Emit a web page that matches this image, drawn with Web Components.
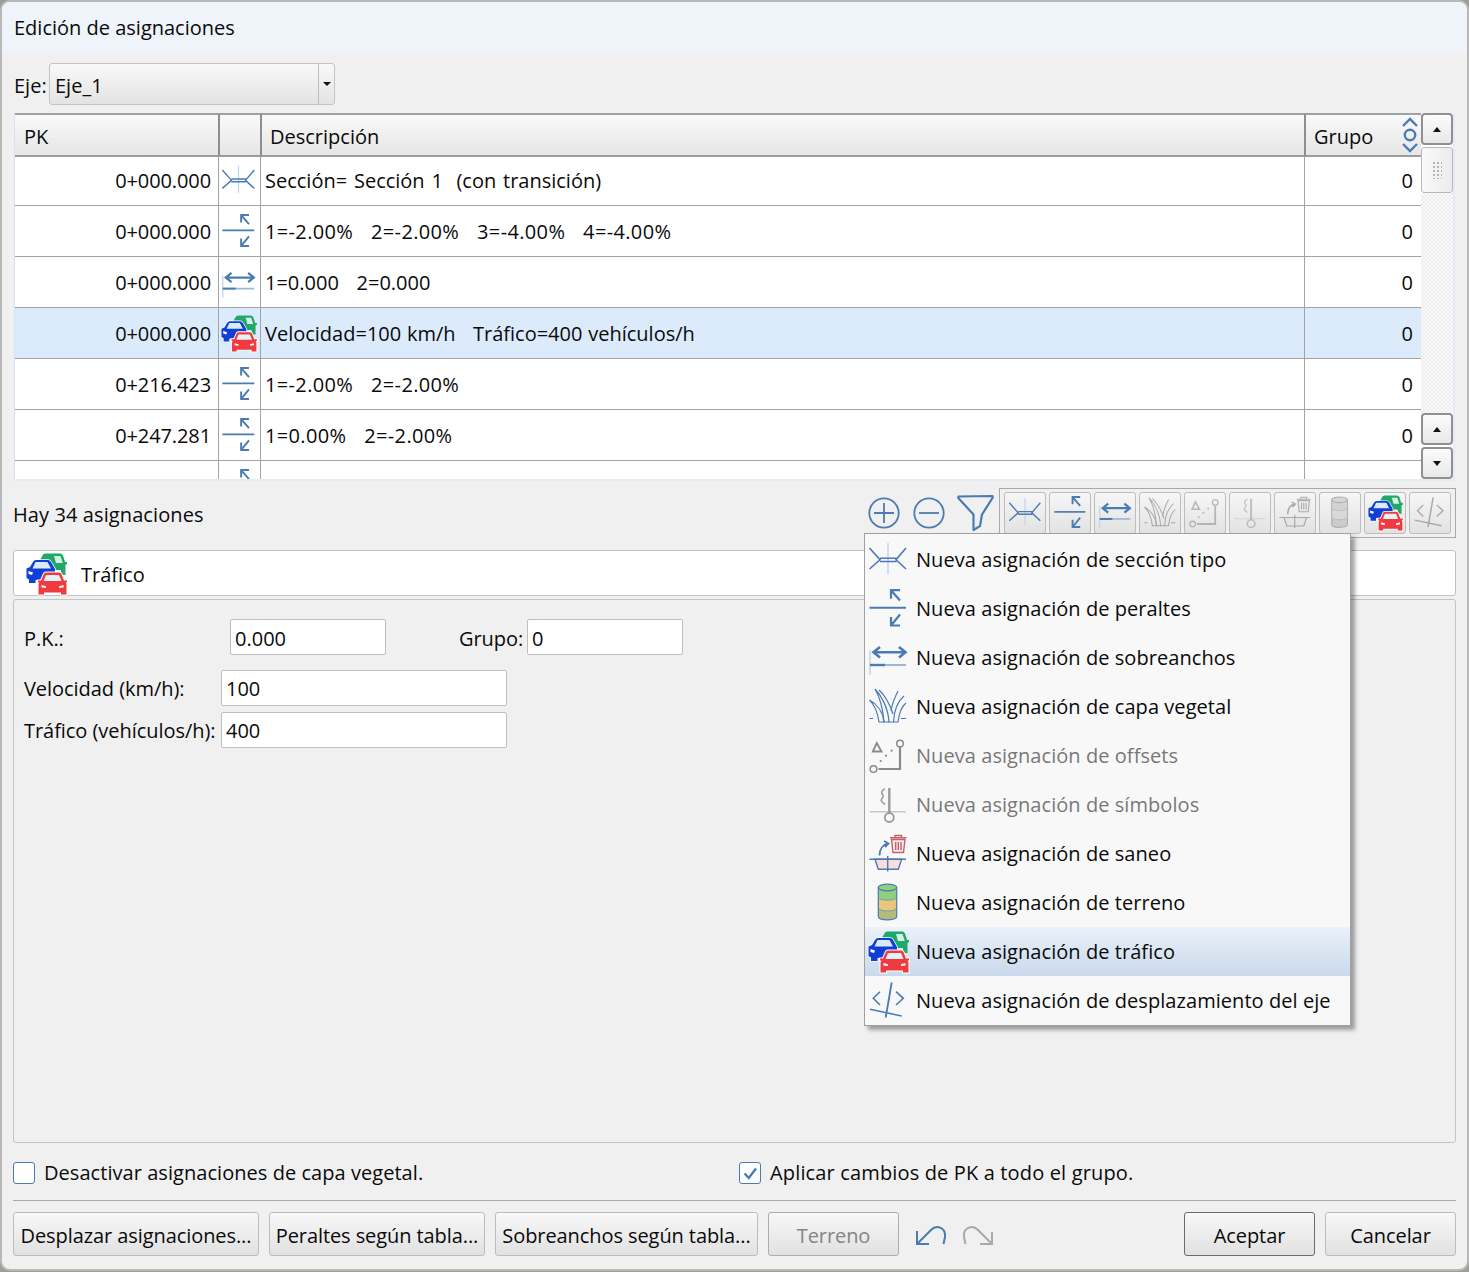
<!DOCTYPE html>
<html lang="es">
<head>
<meta charset="utf-8">
<title>Edición de asignaciones</title>
<style>
  html, body { margin: 0; padding: 0; background: #9c9e98; }
  body { width: 1469px; height: 1272px; overflow: hidden; font-family: "Open Sans", "Noto Sans", sans-serif; font-size: 20px; color: #0a0a0a; }
</style>
</head>
<body>
<edit-dialog heading="Edición de asignaciones">
  <axis-combo label="Eje:" value="Eje_1"></axis-combo>

  <assign-table>
    <assign-row first pk="0+000.000" icon="seccion" grupo="0"><span style="word-spacing:1.6px">Sección= Sección 1  (con transición)</span></assign-row>
    <assign-row pk="0+000.000" icon="peraltes" grupo="0"><span style="letter-spacing:.35px;word-spacing:.4px">1=-2.00%   2=-2.00%   3=-4.00%   4=-4.00%</span></assign-row>
    <assign-row pk="0+000.000" icon="sobreanchos" grupo="0"><span style="word-spacing:.7px">1=0.000   2=0.000</span></assign-row>
    <assign-row selected pk="0+000.000" icon="trafico" grupo="0"><span style="word-spacing:.6px">Velocidad=100 km/h   Tráfico=400 vehículos/h</span></assign-row>
    <assign-row pk="0+216.423" icon="peraltes" grupo="0"><span style="letter-spacing:.35px;word-spacing:.4px">1=-2.00%   2=-2.00%</span></assign-row>
    <assign-row pk="0+247.281" icon="peraltes" grupo="0"><span style="letter-spacing:.35px;word-spacing:.4px">1=0.00%   2=-2.00%</span></assign-row>
    <assign-row pk="" icon="peraltes" grupo=""></assign-row>
  </assign-table>

  <status-row text="Hay 34 asignaciones">
    <line-icon name="plus" size="36"></line-icon>
    <line-icon name="minus" size="36"></line-icon>
    <line-icon name="funnel" size="40"></line-icon>
    <tool-strip>
      <tool-btn icon="seccion"></tool-btn>
      <tool-btn icon="peraltes"></tool-btn>
      <tool-btn icon="sobreanchos"></tool-btn>
      <tool-btn icon="vegetal" muted></tool-btn>
      <tool-btn icon="offsets" muted></tool-btn>
      <tool-btn icon="simbolos" muted></tool-btn>
      <tool-btn icon="saneo" muted></tool-btn>
      <tool-btn icon="terreno" muted></tool-btn>
      <tool-btn icon="trafico"></tool-btn>
      <tool-btn icon="despl" muted></tool-btn>
    </tool-strip>
  </status-row>

  <type-strip icon="trafico">Tráfico</type-strip>

  <form-panel>
    <div slot="row1">
      <field-box low label="P.K.:" value="0.000" label-width="206" width="156"></field-box>
      <field-box low label="Grupo:" value="0" label-width="68" width="156" style="margin-left:73px"></field-box>
    </div>
    <field-box slot="row2" label="Velocidad (km/h):" value="100" label-width="197" width="286"></field-box>
    <field-box slot="row3" label="Tráfico (vehículos/h):" value="400" label-width="197" width="286"></field-box>
  </form-panel>

  <footer-checks>
    <check-box slot="left" style="letter-spacing:.05px">Desactivar asignaciones de capa vegetal.</check-box>
    <check-box slot="right" checked style="letter-spacing:.15px">Aplicar cambios de PK a todo el grupo.</check-box>
  </footer-checks>

  <footer-bar>
    <push-btn width="246">Desplazar asignaciones...</push-btn>
    <push-btn width="216">Peraltes según tabla...</push-btn>
    <push-btn width="263">Sobreanchos según tabla...</push-btn>
    <push-btn width="131" disabled>Terreno</push-btn>
    <line-icon name="undo" size="32" style="margin:8px 0 0 5px"></line-icon>
    <line-icon name="redo" size="32" style="margin:8px 0 0 7px"></line-icon>
    <push-btn slot="end" width="131" primary>Aceptar</push-btn>
    <push-btn slot="end" width="131">Cancelar</push-btn>
  </footer-bar>

  <popup-menu slot="overlay">
    <menu-item icon="seccion">Nueva asignación de sección tipo</menu-item>
    <menu-item icon="peraltes">Nueva asignación de peraltes</menu-item>
    <menu-item icon="sobreanchos">Nueva asignación de sobreanchos</menu-item>
    <menu-item icon="vegetal">Nueva asignación de capa vegetal</menu-item>
    <menu-item icon="offsets" disabled>Nueva asignación de offsets</menu-item>
    <menu-item icon="simbolos" disabled>Nueva asignación de símbolos</menu-item>
    <menu-item icon="saneo">Nueva asignación de saneo</menu-item>
    <menu-item icon="terreno">Nueva asignación de terreno</menu-item>
    <menu-item icon="trafico" active>Nueva asignación de tráfico</menu-item>
    <menu-item icon="despl">Nueva asignación de desplazamiento del eje</menu-item>
  </popup-menu>
</edit-dialog>

<script>
const BLUE = '#4a7bb3';
const PALE = '#c3d5ea';

const RED_CAR = 'M18 19.500Q18.700 18.500 20 18.500H33Q34.500 18.500 35.200 19.500L38 26.500H41V28.500H39.500Q40.500 29.500 40.500 31.500V40.500H35V38.500H18V40.500H12.500V31.500Q12.500 29.500 13.500 28.500H12V26.500H15Z';
const BLUE_CAR = 'M10 6H22Q24 6 25 8L29 15V22L14 26H9.500V29H3V25.500L.5 24V14.500L4 13 7 8Q8 6 10 6Z';
const GREEN_CAR = 'M19.500 -.5H34Q36 -.5 37 1.500L39 8H41V10.500H39.500V21H35V16H28L22 9H12L16 2.500Q17 -.5 19.500 -.5Z';

const ICONS = {
  seccion: `<path stroke="${PALE}" stroke-width="1.500" d="M20 3v31"/>
    <path fill="none" stroke="${BLUE}" stroke-width="1.600" d="M1.500 8 12 19.800 1.500 29M38 8 28 19.800 38 29M12 18.300h16.500M12 21.500h16.500"/>`,
  peraltes: `<path fill="none" stroke="${BLUE}" stroke-width="2" d="M1.500 18.700H38"/>
    <path fill="none" stroke="${BLUE}" stroke-width="2.200" d="M32 1.200H23V9.800M23 1.200 32 11.500M32 36.500H23V28M23 36.500 32 25.500"/>`,
  sobreanchos: `<path fill="none" stroke="${BLUE}" stroke-width="2.600" d="M6 14.300H37M12 9 5.500 14.300 12 19.600M31 9 37.500 14.300 31 19.600"/>
    <path stroke="${PALE}" stroke-width="1.500" d="M2 12V37"/>
    <path stroke="#9db8d6" stroke-width="2" d="M17 27H38"/><path stroke="${BLUE}" stroke-width="2.400" d="M2 27H17"/>`,
  vegetal: `<g fill="none" stroke="${BLUE}" stroke-width="1.200">
    <path d="M7 2C13 8 20 20 21 35h-5C15 23 13 12 7 2Z"/>
    <path d="M11 3C17 8 23 20 25 27"/>
    <path d="M1.500 13C6 17 10 26 11 35h5C15 25 9 17 1.500 13Z"/>
    <path d="M36 9C30 14 26 24 25.500 35h-5"/>
    <path d="M30 4C27 10 24 17 23 24"/>
    <path d="M38 16C33 20 31 27 30 35h-4.500"/>
    <path d="M1.500 31.500H5M33 31.500H38"/></g>`,
  offsets: `<g fill="none" stroke="#8a8a8a" stroke-width="1.500">
    <path stroke-width="1.800" d="M8.800 7 4.800 15.500H13.500Z"/><circle cx="32" cy="7.500" r="3.300"/><circle cx="5.500" cy="33" r="3.300"/>
    <path stroke-width="2.200" d="M32 11V33H10.500"/></g>
    <g fill="#8a8a8a"><circle cx="23.700" cy="14.700" r="1.100"/><circle cx="18" cy="19.700" r="1.100"/><circle cx="12.700" cy="25" r="1.100"/></g>`,
  simbolos: `<g fill="none" stroke="#9a9a9a"><path stroke="#c8c8c8" stroke-width="1.500" d="M1.500 26.700H38"/>
    <path stroke-width="2.400" d="M21.300 3V28"/><circle cx="21.300" cy="32.500" r="4.500" stroke-width="1.800"/>
    <path stroke-width="1.500" d="M17 4C13 5 13 8 15 10.500 16.800 12.500 12 13.500 13.500 16 14.500 18 16 18.500 17 19.500"/></g>`,
  saneo: `<path fill="#fbdcdc" stroke="${BLUE}" stroke-width="1.400" d="M7 25.300 10.300 35.300H30.300L33.700 25.300Z"/>
    <path fill="none" stroke="${BLUE}" stroke-width="1.400" d="M1.500 25.300H38M19.700 22V37.500"/>
    <path fill="none" stroke="${BLUE}" stroke-width="1.800" d="M11.500 21.500C11.500 15 15 10.500 20 9.500M16 7 20.500 9.500 17 13"/>
    <path fill="#fbe9e9" stroke="#c4616c" stroke-width="1.400" d="M23.500 5.500 25 18.500H35.500L37 5.500Z"/>
    <path fill="none" stroke="#c4616c" stroke-width="1.400" d="M22 3.800H38.500M27 3.500V1.500H33.500V3.500M27.700 8V16M30.300 8V16M33 8V16"/>`,
  terreno: `<path fill="#b5bb7a" stroke="${BLUE}" stroke-width="1.200" d="M10.300 4.500V33.500C10.300 38 28.700 38 28.700 33.500V4.500Z"/>
    <path fill="#e6c878" d="M11 15H28V25C28 29 11 29 11 25Z"/>
    <path fill="#8fcf80" d="M11 5H28V14C28 18 11 18 11 14Z"/>
    <ellipse cx="19.500" cy="4.500" rx="9.200" ry="3.300" fill="#8fcf80" stroke="${BLUE}" stroke-width="1.200"/>
    <path fill="none" stroke="#6f9bb8" stroke-width="1" d="M10.500 14.500C11 18 28 18 28.500 14.500M10.500 25C11 29 28 29 28.500 25"/>`,
  trafico: `<path fill="#1fa86a" d="${GREEN_CAR}"/><path fill="#d5f0e2" d="M28 2H34.500L36.800 9H30Z"/>
    <path fill="#0f3fd6" stroke="#fff" stroke-width="1.500" paint-order="stroke" d="${BLUE_CAR}"/>
    <path fill="#dcebfb" d="M9.500 8H21.500L25 14.500H6.500Z"/><path fill="#fff" d="M2.500 17 7 18.500 6 21 2.500 20Z"/>
    <path fill="#f03a3f" stroke="#fff" stroke-width="2" paint-order="stroke" d="${RED_CAR}"/>
    <path fill="#e4f2f6" d="M17.500 27 20 21H33L35.500 27Z"/>
    <path fill="#fff" d="M15.500 31 20 32.300V34L15.500 33.500ZM37.500 31 33 32.300V34L37.500 33.500Z"/>`,
  despl: `<g fill="none" stroke="${BLUE}"><path stroke-width="1.800" d="M23.700 1.500 17.700 36.500"/>
    <path stroke-width="1.600" d="M12 10.700 5.300 17.300 12 24M28 10.700 35.300 17.300 28 24M2 28.300 33.700 35"/></g>`
};

const LINES = {
  plus: [36, `<circle cx="18" cy="18" r="14.700" fill="none" stroke="${BLUE}" stroke-width="1.800"/><path stroke="${BLUE}" stroke-width="1.800" d="M18 8V28M8 18H28"/>`],
  minus: [36, `<circle cx="18" cy="18" r="14.700" fill="none" stroke="${BLUE}" stroke-width="1.800"/><path stroke="${BLUE}" stroke-width="1.800" d="M8 18H28"/>`],
  funnel: [40, `<path fill="none" stroke="${BLUE}" stroke-width="2.200" stroke-linejoin="round" d="M2.500 3.500 36.500 3 36.800 4.500 26 21.500 24 33 17.500 37V21.500L2.300 5Z"/>`],
  undo: [32, `<path fill="none" stroke="${BLUE}" stroke-width="2" d="M3 9V22H15M3 22 17 8C23 2 32 6 31 15L29.500 22"/>`],
  redo: [32, `<path fill="none" stroke="#a9a9a9" stroke-width="2" d="M29 10V22H17M29 22 15 8C9 2 0 6 1 15L2.500 22"/>`]
};

class EditDialog extends HTMLElement {
  constructor() {
    super();
    this.attachShadow({ mode: 'open' });
  }

  getTemplate() {
    const templates = document.createElement('template');
    templates.innerHTML = `
      <header>${this.getAttribute('heading')}</header>
      <main><slot></slot></main>
      <slot name="overlay"></slot>
      ${this.getStyles()}
    `;
    return templates;
  }

  getStyles() {
    return `
      <style>
        :host {
          display: block;
          position: relative;
          box-sizing: border-box;
          width: 1469px;
          height: 1271px;
          background: #f0f0f0;
          border: 2px solid #b9b9b9;
          border-radius: 10px;
          overflow: hidden;
        }
        header {
          height: 50px;
          line-height: 52px;
          padding-left: 12px;
          background: #eef4fa;
        }
        main {
          display: flex;
          flex-direction: column;
          padding: 11px 11px 0;
        }
      </style>
    `;
  }

  connectedCallback() {
    this.shadowRoot.appendChild(this.getTemplate().content.cloneNode(true));
  }
}

class AxisCombo extends HTMLElement {
  constructor() {
    super();
    this.attachShadow({ mode: 'open' });
  }

  connectedCallback() {
    this.shadowRoot.innerHTML = `
      <style>
        :host { display: flex; align-items: center; height: 42px; }
        .lab { width: 36px; padding: 3px 0 0 1px; box-sizing: border-box; }
        .box {
          display: flex;
          align-items: center;
          width: 286px;
          height: 42px;
          box-sizing: border-box;
          border: 1px solid #c4c4c4;
          border-radius: 3px;
          background: linear-gradient(#f9f9f9, #e3e3e3);
        }
        .val { flex: 1; padding: 3px 0 0 5px; }
        .drop { width: 15px; height: 40px; border-left: 1px solid #bdbdbd; display: flex; align-items: center; justify-content: center; }
        .drop i { border: 4px solid transparent; border-top: 4px solid #111; border-bottom: 0; }
      </style>
      <span class="lab">${this.getAttribute('label')}</span>
      <div class="box"><span class="val">${this.getAttribute('value')}</span><span class="drop"><i></i></span></div>
    `;
  }
}

class AssignTable extends HTMLElement {
  constructor() {
    super();
    this.attachShadow({ mode: 'open' });
  }

  connectedCallback() {
    this.shadowRoot.innerHTML = `
      <style>
        :host {
          display: flex;
          box-sizing: border-box;
          width: 1441px;
          height: 368px;
          margin: 8px 0 0 1px;
          border-left: 1px solid #d5e4f4;
          border-right: 2px solid #e4edf7;
          border-bottom: 2px solid #e4edf7;
          background: #fff;
        }
        .grid { width: 1406px; height: 100%; overflow: hidden; }
        .head { display: grid; grid-template-columns: 205px 42px 1044px 115px; height: 44px; box-sizing: border-box; }
        .head div {
          box-sizing: border-box;
          display: flex;
          align-items: center;
          padding: 3px 0 0 8px;
          border-top: 2px solid #9aa3a8;
          border-bottom: 2px solid #9c9c9c;
          border-right: 2px solid #8e8e8e;
          background: linear-gradient(#f9f9f9, #e6e6e6);
          position: relative;
        }
        .head div:first-child { padding-left: 9px; }
        .head div:last-child { border-right: 0; }
        .sort { position: absolute; right: 1px; top: 1px; }
        .bar { width: 32px; display: flex; flex-direction: column; }
        .btn {
          box-sizing: border-box;
          height: 32px;
          border: 2px solid #909090;
          border-radius: 4px;
          background: linear-gradient(#fcfcfc, #e8e8e8);
          display: flex;
          align-items: center;
          justify-content: center;
        }
        .btn + .btn { margin-top: 2px; }
        .up { border: 4px solid transparent; border-bottom: 5px solid #111; border-top: 0; }
        .dn { border: 4px solid transparent; border-top: 5px solid #111; border-bottom: 0; }
        .thumb {
          box-sizing: border-box;
          height: 46px;
          margin-top: 2px;
          border: 1px solid #b9b9b9;
          border-radius: 3px;
          background: linear-gradient(90deg, #f9f9f9, #ececec);
          display: flex;
          align-items: center;
          justify-content: center;
        }
        .grip {
          width: 10px;
          height: 18px;
          background-image: radial-gradient(#b5b5b5 1px, transparent 1.100px);
          background-size: 4px 4px;
        }
        .track {
          flex: 1;
          background-color: #f9f9f9;
          background-image: conic-gradient(#eeeeee 25%, transparent 0 50%, #eeeeee 0 75%, transparent 0);
          background-size: 4px 4px;
        }
      </style>
      <div class="grid">
        <div class="head">
          <div>PK</div><div></div><div>Descripción</div>
          <div>Grupo
            <svg class="sort" width="20" height="38" viewBox="0 0 20 38" fill="none" stroke="${BLUE}" stroke-width="2.400">
              <path d="M3 10 10 3 17 10M3 28 10 35 17 28"/><circle cx="10" cy="19" r="5.200"/>
            </svg>
          </div>
        </div>
        <slot></slot>
      </div>
      <div class="bar">
        <div class="btn"><i class="up"></i></div>
        <div class="thumb"><div class="grip"></div></div>
        <div class="track"></div>
        <div class="btn"><i class="up"></i></div>
        <div class="btn"><i class="dn"></i></div>
      </div>
    `;
  }
}

class AssignRow extends HTMLElement {
  constructor() {
    super();
    this.attachShadow({ mode: 'open' });
  }

  connectedCallback() {
    this.shadowRoot.innerHTML = `
      <style>
        :host {
          display: grid;
          grid-template-columns: 204px 42px 1044px 116px;
          box-sizing: border-box;
          height: 51px;
          border-bottom: 1px solid #a3a3a3;
          white-space: pre;
        }
        :host([first]) { height: 49px; }
        :host([first]) div { padding-bottom: 2px; }
        :host([selected]) { background: #dcebfb; }
        div { display: flex; align-items: center; box-sizing: border-box; border-right: 1px solid #a3a3a3; }
        .pk { justify-content: flex-end; padding-right: 7px; letter-spacing: -.1px; }
        .ic { justify-content: center; padding-right: 3px; }
        .ds { padding-left: 4px; }
        .gr { justify-content: flex-end; padding-right: 8px; border-right: 0; }
      </style>
      <div class="pk">${this.getAttribute('pk')}</div>
      <div class="ic"><gui-icon name="${this.getAttribute('icon')}" size="35"></gui-icon></div>
      <div class="ds"><slot></slot></div>
      <div class="gr">${this.getAttribute('grupo')}</div>
    `;
  }
}

class GuiIcon extends HTMLElement {
  constructor() {
    super();
    this.attachShadow({ mode: 'open' });
  }

  connectedCallback() {
    const size = this.getAttribute('size') || 40;
    this.shadowRoot.innerHTML = `
      <style>
        :host { display: inline-flex; flex: none; }
        svg { overflow: visible; }
        :host([muted]) svg { filter: grayscale(1) opacity(.55); }
      </style>
      <svg width="${size}" height="${size}" viewBox="0 0 40 40">${ICONS[this.getAttribute('name')]}</svg>
    `;
  }
}

class LineIcon extends HTMLElement {
  constructor() {
    super();
    this.attachShadow({ mode: 'open' });
  }

  connectedCallback() {
    const [box, body] = LINES[this.getAttribute('name')];
    const size = this.getAttribute('size');
    this.shadowRoot.innerHTML = `
      <style>:host { display: inline-flex; flex: none; }</style>
      <svg width="${size}" height="${size}" viewBox="0 0 ${box} ${box}">${body}</svg>
    `;
  }
}

class StatusRow extends HTMLElement {
  constructor() {
    super();
    this.attachShadow({ mode: 'open' });
  }

  connectedCallback() {
    this.shadowRoot.innerHTML = `
      <style>
        :host { display: flex; align-items: flex-end; height: 57px; }
        span { flex: 1; align-self: center; padding: 9px 0 0 0; letter-spacing: .1px; }
        .tools { display: flex; align-items: center; gap: 9px; height: 50px; }
      </style>
      <span>${this.getAttribute('text')}</span>
      <div class="tools"><slot></slot></div>
    `;
  }
}

class ToolStrip extends HTMLElement {
  constructor() {
    super();
    this.attachShadow({ mode: 'open' });
  }

  connectedCallback() {
    this.shadowRoot.innerHTML = `
      <style>
        :host {
          display: flex;
          gap: 3px;
          box-sizing: border-box;
          height: 50px;
          padding: 3px 4px 0 4px;
          margin-left: -6px;
          border: 1px solid #a9a9a9;
          background: #f0f0f0;
        }
      </style>
      <slot></slot>
    `;
  }
}

class ToolBtn extends HTMLElement {
  constructor() {
    super();
    this.attachShadow({ mode: 'open' });
  }

  connectedCallback() {
    const muted = this.hasAttribute('muted') ? 'muted' : '';
    this.shadowRoot.innerHTML = `
      <style>
        :host {
          display: flex;
          align-items: center;
          justify-content: center;
          box-sizing: border-box;
          width: 42px;
          height: 42px;
          border: 1px solid #bdbdbd;
          border-radius: 3px;
          background: linear-gradient(#f6f6f6, #e2e2e2);
        }
      </style>
      <gui-icon name="${this.getAttribute('icon')}" size="34" ${muted}></gui-icon>
    `;
  }
}

class TypeStrip extends HTMLElement {
  constructor() {
    super();
    this.attachShadow({ mode: 'open' });
  }

  connectedCallback() {
    this.shadowRoot.innerHTML = `
      <style>
        :host {
          display: flex;
          align-items: center;
          gap: 15px;
          box-sizing: border-box;
          height: 46px;
          margin-top: 12px;
          padding: 3px 0 0 12px;
          background: #fff;
          border: 1px solid #c0c0c0;
          border-radius: 3px;
        }
        gui-icon { margin-top: -2px; }
      </style>
      <gui-icon name="${this.getAttribute('icon')}" size="40"></gui-icon>
      <slot></slot>
    `;
  }
}

class FormPanel extends HTMLElement {
  constructor() {
    super();
    this.attachShadow({ mode: 'open' });
  }

  connectedCallback() {
    this.shadowRoot.innerHTML = `
      <style>
        :host {
          display: block;
          box-sizing: border-box;
          height: 544px;
          margin-top: 3px;
          padding: 19px 0 0 10px;
          border: 1px solid #c4c4c4;
          border-radius: 3px;
        }
        .r1 { display: block; margin-bottom: 15px; }
        .r2 { display: block; margin-bottom: 6px; }
        ::slotted([slot=row1]) { display: flex; }
      </style>
      <div class="r1"><slot name="row1"></slot></div>
      <div class="r2"><slot name="row2"></slot></div>
      <div><slot name="row3"></slot></div>
    `;
  }
}

class FieldBox extends HTMLElement {
  constructor() {
    super();
    this.attachShadow({ mode: 'open' });
  }

  connectedCallback() {
    this.shadowRoot.innerHTML = `
      <style>
        :host { display: flex; align-items: center; height: 36px; }
        label { width: ${this.getAttribute('label-width')}px; white-space: nowrap; letter-spacing: -.05px; }
        :host([low]) label { padding-top: 2px; }
        div {
          box-sizing: border-box;
          width: ${this.getAttribute('width')}px;
          height: 36px;
          line-height: 36px;
          padding-left: 4px;
          background: #fff;
          border: 1px solid #bfbfbf;
          border-radius: 2px;
        }
        :host([low]) div { padding-top: 1px; }
      </style>
      <label>${this.getAttribute('label')}</label>
      <div>${this.getAttribute('value')}</div>
    `;
  }
}

class FooterChecks extends HTMLElement {
  constructor() {
    super();
    this.attachShadow({ mode: 'open' });
  }

  connectedCallback() {
    this.shadowRoot.innerHTML = `
      <style>
        :host {
          display: grid;
          grid-template-columns: 726px 1fr;
          align-items: center;
          height: 58px;
          box-sizing: border-box;
          padding-top: 2px;
          border-bottom: 1px solid #a9a9a9;
        }
      </style>
      <slot name="left"></slot>
      <slot name="right"></slot>
    `;
  }
}

class CheckBox extends HTMLElement {
  constructor() {
    super();
    this.attachShadow({ mode: 'open' });
  }

  connectedCallback() {
    const mark = this.hasAttribute('checked')
      ? `<svg width="21" height="21" viewBox="0 0 21 21"><path fill="none" stroke="${BLUE}" stroke-width="2.400" d="M4.500 10.500 8.800 15 16 5.500"/></svg>`
      : '';
    this.shadowRoot.innerHTML = `
      <style>
        :host { display: flex; align-items: center; gap: 9px; }
        i {
          display: block;
          box-sizing: border-box;
          width: 22px;
          height: 22px;
          background: #fff;
          border: 1px solid ${BLUE};
          border-radius: 3px;
        }
        svg { display: block; margin: 0; }
      </style>
      <i>${mark}</i><slot></slot>
    `;
  }
}

class FooterBar extends HTMLElement {
  constructor() {
    super();
    this.attachShadow({ mode: 'open' });
  }

  connectedCallback() {
    this.shadowRoot.innerHTML = `
      <style>
        :host { display: flex; align-items: center; margin-top: 11px; height: 44px; }
        .l, .r { display: flex; align-items: center; gap: 10px; }
        .r { margin-left: auto; }
      </style>
      <div class="l"><slot></slot></div>
      <div class="r"><slot name="end"></slot></div>
    `;
  }
}

class PushBtn extends HTMLElement {
  constructor() {
    super();
    this.attachShadow({ mode: 'open' });
  }

  connectedCallback() {
    this.shadowRoot.innerHTML = `
      <style>
        :host {
          display: flex;
          align-items: center;
          justify-content: center;
          box-sizing: border-box;
          width: ${this.getAttribute('width')}px;
          height: 44px;
          padding-top: 2px;
          white-space: nowrap;
          letter-spacing: -.08px;
          border: 1px solid #bdbdbd;
          border-radius: 3px;
          background: linear-gradient(#f8f8f8, #e1e1e1);
        }
        :host([primary]) { border-color: #6b6b6b; }
        :host([disabled]) { color: #858585; border-color: #adadad; }
      </style>
      <slot></slot>
    `;
  }
}

class PopupMenu extends HTMLElement {
  constructor() {
    super();
    this.attachShadow({ mode: 'open' });
  }

  connectedCallback() {
    this.shadowRoot.innerHTML = `
      <style>
        :host {
          display: block;
          position: absolute;
          left: 862px;
          top: 531px;
          box-sizing: border-box;
          width: 487px;
          height: 493px;
          padding-top: 1px;
          letter-spacing: .06px;
          background: #f8f8f8;
          border: 1px solid #a0a0a0;
          box-shadow: 4px 4px 4px rgba(0, 0, 0, .35);
        }
      </style>
      <slot></slot>
    `;
  }
}

class MenuItem extends HTMLElement {
  constructor() {
    super();
    this.attachShadow({ mode: 'open' });
  }

  connectedCallback() {
    this.shadowRoot.innerHTML = `
      <style>
        :host {
          display: flex;
          align-items: center;
          gap: 8px;
          box-sizing: border-box;
          height: 49px;
          padding-left: 3px;
          white-space: nowrap;
        }
        :host([disabled]) { color: #787878; }
        :host([active]) { background: linear-gradient(#eaf1f9, #c9d9ec); }
      </style>
      <gui-icon name="${this.getAttribute('icon')}" size="40"></gui-icon>
      <slot></slot>
    `;
  }
}

customElements.define('gui-icon', GuiIcon);
customElements.define('line-icon', LineIcon);
customElements.define('axis-combo', AxisCombo);
customElements.define('assign-row', AssignRow);
customElements.define('assign-table', AssignTable);
customElements.define('status-row', StatusRow);
customElements.define('tool-strip', ToolStrip);
customElements.define('tool-btn', ToolBtn);
customElements.define('type-strip', TypeStrip);
customElements.define('field-box', FieldBox);
customElements.define('form-panel', FormPanel);
customElements.define('check-box', CheckBox);
customElements.define('footer-checks', FooterChecks);
customElements.define('push-btn', PushBtn);
customElements.define('footer-bar', FooterBar);
customElements.define('menu-item', MenuItem);
customElements.define('popup-menu', PopupMenu);
customElements.define('edit-dialog', EditDialog);
</script>
</body>
</html>
